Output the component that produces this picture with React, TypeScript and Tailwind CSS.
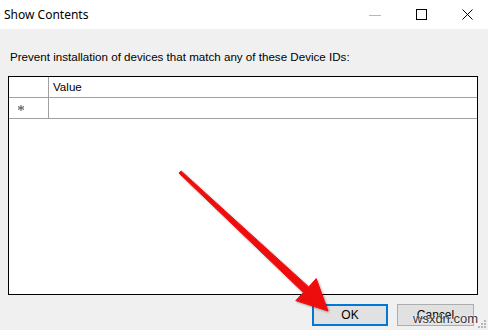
export default function App() {
  return (
    <div className="relative w-[488px] h-[330px] overflow-hidden bg-[#f0f0f0] flex flex-col font-['Liberation_Sans',Arial,sans-serif] text-black">
      {/* Title bar */}
      <div className="h-[29px] bg-white flex items-center shrink-0">
        <span className="pl-[4px] text-[12px] font-['Noto_Sans',sans-serif] text-black">Show Contents</span>
        <div className="ml-auto mr-[-2px] flex h-full">
          <div className="w-[46px] flex items-center justify-center">
            <svg width="12" height="12" viewBox="0 0 12 12">
              <line x1="0" y1="6.5" x2="12" y2="6.5" stroke="#b8b8b8" strokeWidth="1" />
            </svg>
          </div>
          <div className="w-[46px] flex items-center justify-center">
            <svg width="11" height="11" viewBox="0 0 11 11">
              <rect x="0.5" y="0.5" width="10" height="10" fill="none" stroke="#000" strokeWidth="1" />
            </svg>
          </div>
          <div className="w-[46px] flex items-center justify-center">
            <svg width="11" height="11" viewBox="0 0 11 11">
              <path d="M0.5 0.5 L10.5 10.5 M10.5 0.5 L0.5 10.5" stroke="#000" strokeWidth="1" />
            </svg>
          </div>
        </div>
      </div>

      {/* Body */}
      <div className="flex flex-col px-[8px]">
        <p className="mt-[21px] pl-[2px] text-[11.6px] leading-[13px]">
          Prevent installation of devices that match any of these Device IDs:
        </p>

        <div className="mt-[13px] w-[470px] h-[219px] border border-black bg-white flex flex-col">
          <div className="h-[21px] flex border-b border-[#a0a0a0]">
            <div className="w-[40px] border-r border-[#a0a0a0]" />
            <div className="pl-[4px] flex items-center text-[11.6px]">Value</div>
          </div>
          <div className="h-[21px] flex border-b border-[#a0a0a0]">
            <div className="w-[40px] border-r border-[#a0a0a0] flex items-center pl-[9px]">
              <svg width="6" height="6" viewBox="0 0 6 6">
                <path d="M3 0 L3 6 M0 1.5 L6 4.5 M0 4.5 L6 1.5" stroke="#707070" strokeWidth="1.2" />
              </svg>
            </div>
            <div className="flex-1" />
          </div>
        </div>

        <div className="mt-[9px] flex gap-[9px] pl-[304px]">
          <button className="w-[76px] h-[22px] bg-[#e1e1e1] border-2 border-[#0078d7] text-[12px] flex items-center justify-center">
            OK
          </button>
          <button className="w-[77px] h-[22px] bg-[#e1e1e1] border border-[#adadad] text-[12px] flex items-center justify-center">
            Cancel
          </button>
        </div>
      </div>

      {/* Red annotation arrow */}
      <svg className="absolute left-0 top-0 pointer-events-none" width="488" height="330" viewBox="0 0 488 330">
        <defs>
          <filter id="sh" x="-10%" y="-10%" width="120%" height="120%">
            <feDropShadow dx="1" dy="1" stdDeviation="1.2" floodColor="#000" floodOpacity="0.35" />
          </filter>
        </defs>
        <path
          d="M181 170.9 L308.7 286.9 L316.2 278.6 L328 311 L295.8 300.6 L303.3 292.5 L179 173.1 Z"
          fill="#ee0a0a"
          strokeLinejoin="round"
          stroke="#ee0a0a"
          strokeWidth="1"
          filter="url(#sh)"
        />
      </svg>

      {/* Watermark */}
      <span className="absolute left-[413px] top-[312px] text-[13px] leading-[14px] text-[#333] [text-shadow:0_0_2px_#fff,0_0_2px_#fff]">
        wsxdn.com
      </span>

      {/* Size grip */}
      <svg className="absolute right-[1px] bottom-[1px]" width="10" height="10" viewBox="0 0 10 10">
        <g fill="#b8b8b8">
          <rect x="7" y="1" width="2" height="2" />
          <rect x="4" y="4" width="2" height="2" />
          <rect x="7" y="4" width="2" height="2" />
          <rect x="1" y="7" width="2" height="2" />
          <rect x="4" y="7" width="2" height="2" />
          <rect x="7" y="7" width="2" height="2" />
        </g>
      </svg>
    </div>
  );
}
